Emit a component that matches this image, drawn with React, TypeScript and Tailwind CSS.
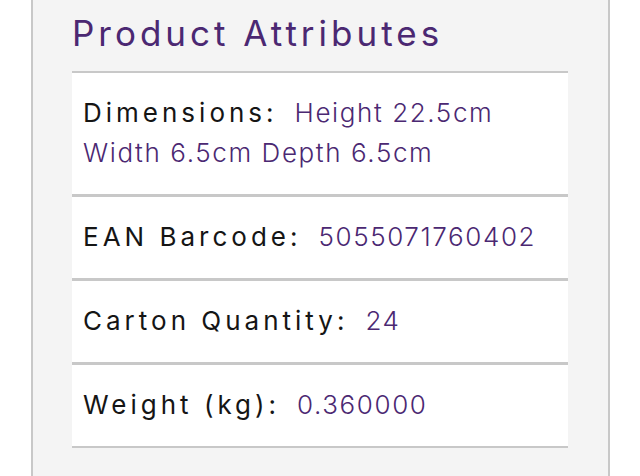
const attributes = [
  { label: 'Dimensions:', value: 'Height 22.5cm Width 6.5cm Depth 6.5cm' },
  { label: 'EAN Barcode:', value: '5055071760402' },
  { label: 'Carton Quantity:', value: '24' },
  { label: 'Weight (kg):', value: '0.360000' },
]

export default function App() {
  return (
    <div className="min-h-screen bg-white font-['Inter',sans-serif]">
      <section className="ml-[31px] h-[476px] w-[579px] border-x-2 border-[#c8c8c8] bg-[#f4f4f4] pl-[39px] pr-[40px] pt-[9px]">
        <h2 className="text-[35px] leading-[48px] tracking-[4px] text-[#4b2872]">
          Product Attributes
        </h2>
        <ul className="mt-[14px] border-t-2 border-[#c8c8c8]">
          {attributes.map((attr, i) => (
            <li
              key={attr.label}
              className={`bg-white px-[11px] pt-5 pb-[21px] text-[26px] leading-[40px] border-[#c8c8c8] ${
                i === attributes.length - 1 ? 'border-b-2' : 'border-b-[3px]'
              }`}
            >
              <span className="mr-[17px] tracking-[4px] text-[#151515]">{attr.label}</span>
              <span className="font-light tracking-[1.6px] text-[#4b2872]">{attr.value}</span>
            </li>
          ))}
        </ul>
      </section>
    </div>
  )
}
